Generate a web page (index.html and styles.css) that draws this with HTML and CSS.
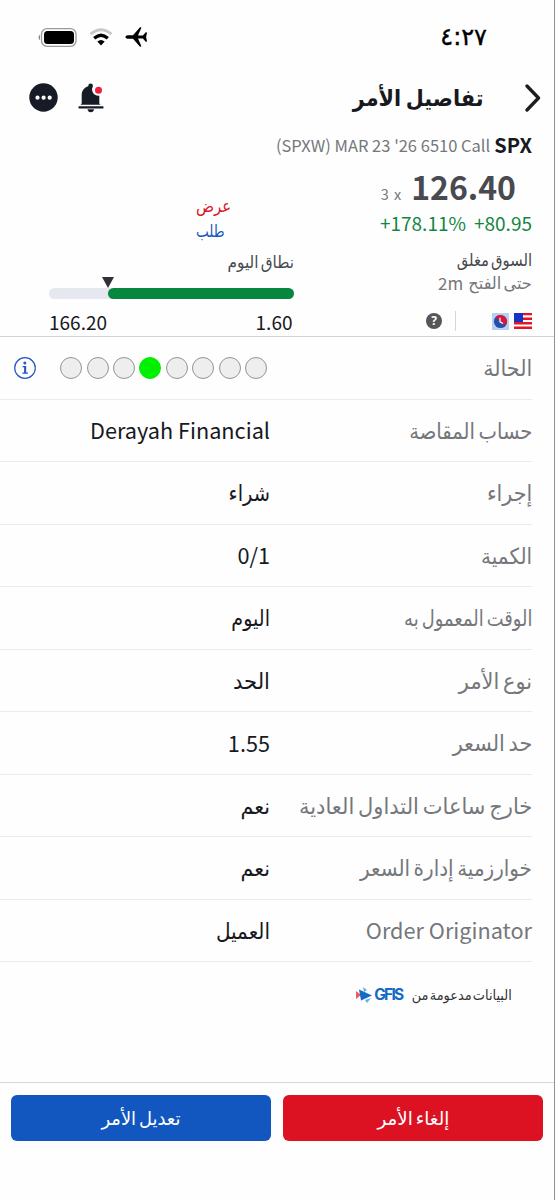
FILE: index.html
```
<!DOCTYPE html>
<html lang="ar" dir="rtl">
<head>
<meta charset="utf-8">
<meta name="viewport" content="width=device-width">
<title>تفاصيل الأمر</title>
<link rel="stylesheet" href="styles.css">
</head>
<body>
<div class="screen">
  <header class="status">
    <span class="clock" dir="ltr">٤:٢٧</span>
    <div class="status-icons">
      <svg width="23" height="20" viewBox="0 0 23 20"><path fill="#000" d="M.5 10c0-1 1-1.700 2.200-1.700h5.300L14.600.700c.6-.6 1.800-.5 1.800.1L13 8.400h4.900l2.600-2.900c.5-.5 1.600-.3 1.500.3L21.100 10l.9 4.200c.1.600-1 .8-1.500.3l-2.600-2.900H13l3.400 7.600c0 .6-1.200.7-1.800.1L8 11.700H2.700C1.500 11.700.5 11 .5 10z"/></svg>
      <svg width="24" height="18" viewBox="0 0 24 18"><g fill="none"><path d="M1.500 6.200Q12-2.800 22.500 6.200" stroke="#c9c9c9" stroke-width="3"/><path d="M5.200 10.300Q12 4.200 18.800 10.300" stroke="#000" stroke-width="3.200"/></g><path d="M8.300 13.600q3.700-3.200 7.400 0L12 17.400z"/></svg>
      <svg width="39" height="19" viewBox="0 0 39 19"><rect x="3.500" y=".700" width="34.500" height="17.600" rx="5.500" fill="#fff" stroke="#999" stroke-width="1.300"/><rect x="6" y="3" width="30" height="13" rx="3.500"/><path d="M2 6.500Q-1 9.500 2 12.500z" fill="#888"/></svg>
    </div>
  </header>

  <nav class="nav">
    <svg class="back" width="18" height="28" viewBox="0 0 18 28"><path d="M3 2 14.500 14 3 26" fill="none" stroke="#1d1e22" stroke-width="3.300" stroke-linecap="round" stroke-linejoin="round"/></svg>
    <h1 class="title fit" style="--fit:.905">تفاصيل الأمر</h1>
    <div class="nav-actions">
      <svg width="26" height="30" viewBox="0 0 26 30"><g fill="#171b26"><path d="M3.700 20.500V12.500C3.700 7.500 6.200 4.700 10.300 3.300V2.800a2.300 2.300 0 0 1 4.600 0v.4a6 6 0 0 0-.4 5.600c1 2.500 3.500 4.100 6.800 4v7.700l1.200 1.300H2.500z"/><rect x=".500" y="23.200" width="25" height="2.200" rx=".6"/><path d="M9.500 26.300h6.600q-.5 3-3.300 3t-3.300-3z"/></g><circle cx="20.500" cy="7.200" r="3.500" fill="#e9233d"/></svg>
      <svg width="29" height="29" viewBox="0 0 29 29"><circle cx="14.500" cy="14.500" r="14.200" fill="#171b26"/><g fill="#fff"><circle cx="8.500" cy="14.700" r="2.100"/><circle cx="14.600" cy="14.700" r="2.100"/><circle cx="20.700" cy="14.700" r="2.100"/></g></svg>
    </div>
  </nav>

  <section class="quote">
    <div class="contract"><b dir="ltr">SPX</b><span dir="ltr">(SPXW) MAR 23 '26 6510 Call</span></div>
    <div class="quote-body">
      <div class="quote-side">
        <div class="price"><strong>126.40</strong><span dir="ltr">3 x</span></div>
        <div class="change"><span dir="ltr">+80.95</span><span dir="ltr">+178.11%</span></div>
        <div class="market ar fit" style="--fit:.87">السوق مغلق</div>
        <div class="opens"><span class="ar fit" style="--fit:.95">حتى الفتح</span><span class="latin">2m</span></div>
        <div class="flags">
          <svg width="18" height="16" viewBox="0 0 18 16"><path fill="#fff" d="M0 0h18v16H0z"/><path fill="#e31525" d="M0 0h18v2.300H0zm0 4.600h18v2.300H0zm0 4.500h18v2.300H0zm0 4.500h18V16H0z"/><path fill="#1733c5" d="M0 0h9v9H0z"/></svg>
          <svg width="17" height="17" viewBox="0 0 17 17"><path fill="#b9cff0" d="M0 0h17v17H0z"/><circle cx="8.500" cy="8.500" r="6.600" fill="#2450ad"/><path d="M3.500 4.200A6.600 6.600 0 0 1 13.500 12.800Z" fill="#d6173a"/><path d="M8 4.800v4l3 1.800" fill="none" stroke="#fff" stroke-width="1.200"/></svg>
          <i class="separator"></i>
          <span class="help">?</span>
        </div>
      </div>
      <div class="range">
        <div class="sides"><span class="ask ar fit" style="--fit:.88">عرض</span><span class="bid ar fit" style="--fit:.8">طلب</span></div>
        <div class="range-title ar fit" style="--fit:.9">نطاق اليوم</div>
        <div class="track"><div class="fill"></div><i class="marker"></i></div>
        <div class="limits"><span>1.60</span><span>166.20</span></div>
      </div>
    </div>
  </section>

  <main class="details">
    <div class="row"><span class="label ar fit" style="--fit:.94">الحالة</span>
      <div class="state"><div class="dots"><i></i><i></i><i></i><i></i><i class="on"></i><i></i><i></i><i></i></div>
      <svg width="22" height="22" viewBox="0 0 22 22"><circle cx="11" cy="11" r="10.300" fill="none" stroke="#2456c4" stroke-width="1.200"/><g fill="#2456c4"><circle cx="10.800" cy="5.900" r="1.500"/><path d="M8.600 9h3.600v6.500h1.700v1.200H8.400v-1.200h1.700v-5.300H8.600z"/></g></svg></div></div>
    <div class="row"><span class="label ar fit" style="--fit:.89">حساب المقاصة</span><span class="value">Derayah Financial</span></div>
    <div class="row"><span class="label ar fit" style="--fit:.94">إجراء</span><span class="value ar fit" style="--fit:.88">شراء</span></div>
    <div class="row"><span class="label ar fit" style="--fit:.91">الكمية</span><span class="value" dir="ltr">0/1</span></div>
    <div class="row"><span class="label ar fit" style="--fit:.81">الوقت المعمول به</span><span class="value ar fit" style="--fit:.87">اليوم</span></div>
    <div class="row"><span class="label ar fit" style="--fit:.95">نوع الأمر</span><span class="value ar fit" style="--fit:.96">الحد</span></div>
    <div class="row"><span class="label ar fit" style="--fit:.945">حد السعر</span><span class="value">1.55</span></div>
    <div class="row"><span class="label ar fit" style="--fit:.955">خارج ساعات التداول العادية</span><span class="value ar fit" style="--fit:.94">نعم</span></div>
    <div class="row"><span class="label ar fit" style="--fit:.905">خوارزمية إدارة السعر</span><span class="value ar fit" style="--fit:.94">نعم</span></div>
    <div class="row"><span class="label">Order Originator</span><span class="value ar fit" style="--fit:.91">العميل</span></div>
  </main>

  <div class="source">
    <span class="ar fit" style="--fit:.92">البيانات مدعومة من</span>
    <span class="gfis" dir="ltr"><svg width="16" height="16" viewBox="0 0 16 16"><path fill="#ed5a62" d="M0 4l5 4-5 4z"/><path fill="#65aee8" d="M7 0l4 3-3 2zM9 13l6-2-4 5z"/><path fill="#146bc5" d="M3 2.500l13 6-11 5z"/></svg><b>GFIS</b></span>
  </div>

  <footer class="actions">
    <button class="btn cancel"><span class="ar fit" style="--fit:.96">إلغاء الأمر</span></button>
    <button class="btn modify"><span class="ar fit" style="--fit:.94">تعديل الأمر</span></button>
  </footer>
</div>
</body>
</html>
```
FILE: styles.css
```
* { box-sizing: border-box; }
body { margin: 0; background: #fff; }
svg { display: block; flex: none; }
.screen {
  width: 555px; height: 1200px; overflow: hidden;
  display: flex; flex-direction: column;
  border-right: 1px solid #919194;
  background: #fefefe; color: #17191f;
  font-family: "Noto Sans CJK SC", "DejaVu Sans", sans-serif;
  white-space: nowrap;
}
.ar { font-family: "DejaVu Sans", sans-serif; }
/* Condensed Arabic: --fit is the horizontal scale of the run */
.fit { transform: scaleX(var(--fit)); transform-origin: right center; word-spacing: -3px; }
.status { height: 74px; padding: 0 67px 0 38px; display: flex; align-items: center; justify-content: space-between; }
.clock { font: 400 24px/30px "DejaVu Sans", sans-serif; color: #000; -webkit-text-stroke: .4px #000; }
.status-icons { display: flex; align-items: center; gap: 12px; }
.nav { height: 48px; padding: 0 12px 0 29px; display: flex; align-items: center; }
.title { margin: 0 40px 0 0; font: bold 23px/34px "DejaVu Sans", sans-serif; }
.nav-actions { display: flex; align-items: center; gap: 20px; margin: -1px auto 0 0; }
.quote { height: 215px; padding: 10px 22px 0 48px; border-bottom: 1px solid #d2d3d5; }
.contract { height: 26px; display: flex; align-items: center; gap: 4px; color: #75777b; font-size: 16.500px; line-height: 26px; }
.contract b { font-size: 20px; color: #17191f; }
.quote-body { display: flex; justify-content: space-between; }
.quote-side { width: 160px; }
.price { height: 56px; padding-right: 16px; display: flex; align-items: baseline; gap: 10px; line-height: 56px; color: #484a50; }
.price strong { font-size: 32px; }
.price span { font-size: 14.500px; color: #75777b; word-spacing: 2px; }
.change { height: 16px; display: flex; align-items: center; gap: 8px; font-size: 19px; color: #128642; }
.market { height: 24px; margin-top: 18px; font-size: 17px; line-height: 24px; color: #45474d; }
.opens { height: 22px; display: flex; align-items: center; gap: 2px; font-size: 17px; line-height: 22px; color: #75777b; }
.flags { height: 20px; margin-top: 17px; display: flex; align-items: center; }
.flags svg + svg { margin-right: 5px; }
.separator { width: 1px; height: 20px; margin: 0 36px 0 13px; background: #d5d6d9; }
.help { width: 16px; height: 16px; border-radius: 50%; background: #55565a; color: #fff; font: bold 12px/16px "Noto Sans", sans-serif; text-align: center; }
.range { width: 246px; padding: 36px 0 0; }
.sides { display: flex; flex-direction: column; direction: ltr; padding-left: 148px; font-size: 17px; line-height: 25px; }
.sides .fit { transform-origin: left center; }
.ask { color: #dc1525; }
.bid { color: #1659bf; }
.range-title { margin-top: 6px; height: 24px; font-size: 17px; line-height: 24px; color: #484a50; }
.track { position: relative; width: 245px; height: 11px; margin: 13.5px .500px 0 0; border-radius: 6px; background: #e5e8ef; }
.fill { width: 186px; height: 11px; border-radius: 6px; background: #078640; }
.marker { position: absolute; left: 53px; top: -11px; border: 6px solid transparent; border-top: 11px solid #303238; border-bottom: 0; }
.limits { display: flex; justify-content: space-between; padding: 9.5px 1.500px 0 1px; font-size: 19px; line-height: 28px; }
.details { padding-right: 22px; }
.row { height: 62.5px; padding-left: 14px; display: flex; align-items: center; justify-content: space-between; border-bottom: 1px solid #ebebed; }
.label { font-size: 21.700px; line-height: 30px; color: #75777b; }
.value { width: 256px; font-size: 21.700px; line-height: 30px; color: #17191f; direction: ltr; text-align: right; }
.row .ar { font-size: 22px; padding-top: 3px; }
.state { display: flex; align-items: center; gap: 24px; width: 253px; padding-top: 1px; }
.dots { display: flex; gap: 4.400px; }
.dots i { width: 22px; height: 22px; border: 1px solid #949494; border-radius: 50%; background: #eee; }
.dots .on { background: #00f000; border-color: #00f000; }
.source { display: flex; align-items: center; height: 65px; padding-right: 42px; color: #303238; font-size: 14px; }
.gfis { display: flex; align-items: center; gap: 2px; color: #146bc5; }
.gfis b { font: bold 15.5px/20px Inter, sans-serif; letter-spacing: -1.800px; width: 29px; }
.actions { margin-top: auto; height: 118px; padding: 12px 11px 0; border-top: 1px solid #d8d8da; display: flex; gap: 12px; align-items: flex-start; }
.btn { flex: 1; height: 46px; border: 0; border-radius: 6px; color: #fff; font-size: 19px; line-height: 46px; padding: 0; }
.btn .fit { display: inline-block; transform-origin: center; }
.cancel { background: #dc1222; }
.modify { background: #1257c0; }
```
